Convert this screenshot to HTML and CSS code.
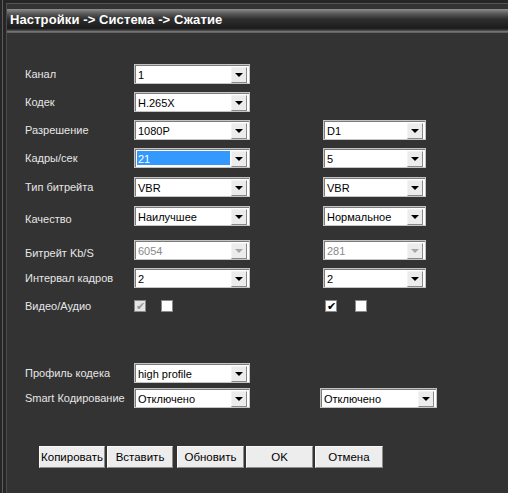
FILE: index.html
```html
<!DOCTYPE html>
<html lang="ru">
  <head>
    <meta charset="UTF-8" />
    <title>Сжатие</title>
    <link rel="stylesheet" href="styles.css">
  </head>
  <body>
    <div class="window">
      <div class="window-inner">
        <h1 class="title-bar">Настройки -&gt; Система -&gt; Сжатие</h1>

        <div class="form">
          <div class="row">
            <span class="label">Канал</span>
            <div class="select"><span class="value">1</span><span class="arrow"></span></div>
          </div>
          <div class="row">
            <span class="label">Кодек</span>
            <div class="select"><span class="value">H.265X</span><span class="arrow"></span></div>
          </div>
          <div class="row">
            <span class="label">Разрешение</span>
            <div class="select"><span class="value">1080P</span><span class="arrow"></span></div>
            <div class="select select-sub"><span class="value">D1</span><span class="arrow"></span></div>
          </div>
          <div class="row">
            <span class="label">Кадры/сек</span>
            <div class="select"><span class="value value-active">21</span><span class="arrow"></span></div>
            <div class="select select-sub"><span class="value">5</span><span class="arrow"></span></div>
          </div>
          <div class="row row-wide">
            <span class="label">Тип битрейта</span>
            <div class="select"><span class="value">VBR</span><span class="arrow"></span></div>
            <div class="select select-sub"><span class="value">VBR</span><span class="arrow"></span></div>
          </div>
          <div class="row row-wide">
            <span class="label label-low">Качество</span>
            <div class="select"><span class="value">Наилучшее</span><span class="arrow"></span></div>
            <div class="select select-sub"><span class="value">Нормальное</span><span class="arrow"></span></div>
          </div>
          <div class="row row-bitrate">
            <span class="label label-low">Битрейт Kb/S</span>
            <div class="select disabled"><span class="value">6054</span><span class="arrow"></span></div>
            <div class="select select-sub disabled"><span class="value">281</span><span class="arrow"></span></div>
          </div>
          <div class="row">
            <span class="label">Интервал кадров</span>
            <div class="select"><span class="value">2</span><span class="arrow"></span></div>
            <div class="select select-sub"><span class="value">2</span><span class="arrow"></span></div>
          </div>
          <div class="row row-check">
            <span class="label">Видео/Аудио</span>
            <div class="checks">
              <span class="check checked disabled"></span>
              <span class="check"></span>
            </div>
            <div class="checks checks-sub">
              <span class="check checked"></span>
              <span class="check"></span>
            </div>
          </div>

          <div class="row row-profile">
            <span class="label">Профиль кодека</span>
            <div class="select"><span class="value">high profile</span><span class="arrow"></span></div>
          </div>
          <div class="row row-smart">
            <span class="label">Smart Кодирование</span>
            <div class="select"><span class="value">Отключено</span><span class="arrow"></span></div>
            <div class="select select-smart"><span class="value">Отключено</span><span class="arrow"></span></div>
          </div>
        </div>

        <div class="buttons">
          <button class="btn btn-copy">Копировать</button>
          <button class="btn">Вставить</button>
          <button class="btn btn-refresh">Обновить</button>
          <button class="btn btn-ok">OK</button>
          <button class="btn btn-cancel">Отмена</button>
        </div>
      </div>
    </div>
  </body>
</html>
```

FILE: styles.css
```css
html,
body {
  margin: 0;
  height: 100%;
}

body {
  background-color: #262626;
  font-family: "Liberation Sans", Arial, sans-serif;
  font-size: 11px;
  overflow: hidden;
}

.window {
  height: 100%;
  margin-left: 2px;
  border-left: 1px solid #5c5c5c;
  padding-top: 3px;
  box-sizing: border-box;
}

.window-inner {
  height: 100%;
  margin-left: 3px;
  border-left: 1px solid #4a4a4a;
  border-top: 1px solid #555;
  background-color: #333333;
  padding-top: 5px;
  box-sizing: border-box;
}

.title-bar {
  margin: 0;
  height: 24px;
  line-height: 22px;
  padding-left: 3px;
  color: #ffffff;
  font-size: 13px;
  font-weight: bold;
  letter-spacing: 0.1px;
  background: linear-gradient(#8e8e8e 0, #5c5c5c 18%, #2e2e2e 42%, #1c1c1c 80%, #3a3a3a 88%, #767676 94%, #5a5a5a 100%);
}

.form {
  display: flex;
  flex-direction: column;
  padding-top: 31px;
  padding-left: 18px;
}

.row {
  display: flex;
  align-items: center;
  height: 20px;
  margin-bottom: 8px;
}

.row-wide {
  margin-top: 1px;
}

.row-bitrate {
  margin-top: 6px;
}

.row-check {
  height: 12px;
  margin-top: 4px;
}

.row-profile {
  margin-top: 44px;
  margin-bottom: 4px;
  height: 18px;
}

.row-smart {
  margin-top: 2px;
}

.label {
  width: 109px;
  color: #e6e6e6;
  white-space: nowrap;
}

.label-low {
  position: relative;
  top: 3px;
}

.select {
  display: flex;
  width: 116px;
  height: 20px;
  box-sizing: border-box;
  border: 1px solid #c4c4c4;
  box-shadow: inset 1px 1px 0 #7c7c7c;
  background-color: #ffffff;
  padding: 2px 2px 2px 2px;
}

.select-sub {
  margin-left: 73px;
  width: 103px;
}

.select-smart {
  margin-left: 70px;
  width: 117px;
}

.value {
  flex: 1;
  line-height: 16px;
  padding-left: 1px;
  color: #000;
  white-space: nowrap;
  overflow: hidden;
}

.value-active {
  background-color: #3399ff;
  color: #ffffff;
  margin-right: 1px;
}

.arrow {
  width: 16px;
  height: 16px;
  box-sizing: border-box;
  border: 1px solid;
  border-color: #f4f4f4 #888 #888 #f4f4f4;
  background-color: #ececec;
  display: flex;
  align-items: center;
  justify-content: center;
}

.arrow::after {
  content: "";
  border-left: 4px solid transparent;
  border-right: 4px solid transparent;
  border-top: 4px solid #000;
}

.disabled .value {
  color: #8a8a8a;
}

.disabled .arrow::after {
  border-top-color: #a8a8a8;
}

.checks {
  display: flex;
  gap: 15px;
  width: 116px;
}

.checks-sub {
  margin-left: 75px;
  gap: 18px;
}

.check {
  width: 12px;
  height: 12px;
  box-sizing: border-box;
  border: 1px solid #8a8a8a;
  background-color: #ffffff;
  display: flex;
  align-items: center;
  justify-content: center;
  font-size: 11px;
  line-height: 1;
  color: #000;
}

.check.checked::after {
  content: "✔";
}

.check.disabled {
  background-color: #e6e6e6;
  color: #9a9a9a;
}

.buttons {
  display: flex;
  gap: 2px;
  margin-top: 30px;
  padding-left: 32px;
}

.btn {
  height: 22px;
  width: 66px;
  padding: 0;
  font-family: "Liberation Sans", Arial, sans-serif;
  font-size: 11.5px;
  color: #000;
  background-color: #ededed;
  border: 1px solid;
  border-color: #fafafa #8c8c8c #8c8c8c #fafafa;
}

.btn-refresh {
  margin-left: 2px;
  width: 67px;
}

.btn-ok {
  width: 67px;
}

.btn-cancel {
  width: 68px;
}
```
